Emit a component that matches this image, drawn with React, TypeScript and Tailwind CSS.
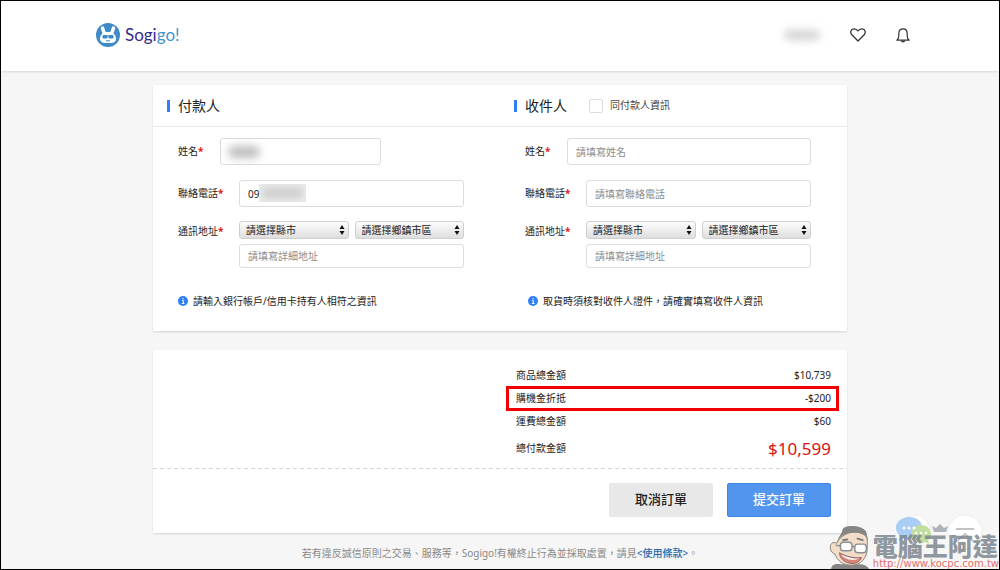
import { useState } from "react";
import type { ReactNode } from "react";

function SogiLogo() {
  return (
    <svg viewBox="0 0 48 48" className="size-6" aria-hidden="true">
      <circle cx="24" cy="24" r="24" fill="#3f8ac9" />
      <path d="M13 10c1 6 3 9 6 13M35 10c-1 6-3 9-6 13" stroke="#fff" strokeWidth="7" strokeLinecap="round" fill="none" />
      <path d="M17 18h14c5 3 9 7 9 13 0 7-5 9-11 9H19C13 40 8 38 8 31c0-6 4-10 9-13z" fill="#fff" />
      <rect x="13" y="24" width="10" height="7" rx="2" fill="#3f8ac9" />
      <rect x="25" y="24" width="10" height="7" rx="2" fill="#3f8ac9" />
      <path d="M22 26h4" stroke="#3f8ac9" strokeWidth="2" />
      <path d="M20 35.500h8" stroke="#3f8ac9" strokeWidth="2" />
    </svg>
  );
}

function Header() {
  return (
    <header className="bg-white shadow-[0_1px_2px_rgba(0,0,0,0.12)]">
      <div className="mx-auto flex h-[70px] w-full max-w-[820px] items-center justify-between pb-[2px] pl-[6px]">
        <a href="#home" className="flex items-center gap-[5px]">
          <SogiLogo />
          <span className="font-['Lato',sans-serif] text-[17px] leading-6 text-[#37298a]">
            Sogi<span className="text-[#4492ce]">go!</span>
          </span>
        </a>
        <nav className="flex items-center gap-[30px]">
          <span className="h-[10px] w-9 rounded-full bg-[#d2d2d2] blur-[4px]" />
          <button type="button" aria-label="收藏">
            <svg viewBox="0 0 16 14" className="h-[14px] w-4" fill="none" stroke="#333" strokeWidth="1.300" strokeLinejoin="round">
              <path d="M8 13 1.800 6.800C.1 4.900.4 1.100 4 .8 6 .7 7.200 1.700 8 3c.8-1.300 2-2.300 4-2.200 3.600.3 3.900 4.100 2.200 6z" />
            </svg>
          </button>
          <button type="button" aria-label="通知">
            <svg viewBox="0 0 14 15" className="h-[15px] w-[14px]" fill="none" stroke="#333" strokeWidth="1.200" strokeLinejoin="round">
              <path d="M.8 12.200c1.500-1 2-2.200 2-4.200V5.500C2.800 2.500 4.500.8 7 .8s4.200 1.700 4.200 4.700V8c0 2 .5 3.200 2 4.200z" />
              <path d="M5.300 12.800c.4 1.300 3 1.300 3.400 0" fill="#333" />
            </svg>
          </button>
        </nav>
      </div>
    </header>
  );
}

const FIELD =
  "w-full rounded-[3px] border border-[#dcdcdc] bg-white px-2 text-[10px] text-[#222] outline-none placeholder:text-[#8d8d8d]";

function Row({ id, label, wide, children }: { id: string; label: string; wide?: boolean; children: ReactNode }) {
  return (
    <div className="flex items-start">
      <label htmlFor={id} className={`shrink-0 leading-[27px] ${wide ? "w-[61px]" : "w-[42px]"}`}>
        {label}
        <span className="font-bold text-[#e0201b]">*</span>
      </label>
      {children}
    </div>
  );
}

function Picker({ id, label, text }: { id: string; label: string; text: string }) {
  return (
    <div className="relative flex-1">
      <select
        id={id}
        aria-label={label}
        className="block h-[18px] w-full appearance-none rounded-[3px] border border-[#cfcfcf] bg-linear-to-b from-[#fdfdfd] to-[#dedede] pr-4 pl-[6px] text-[10px] leading-4 text-[#222]"
      >
        <option>{text}</option>
      </select>
      <svg viewBox="0 0 6 10" className="pointer-events-none absolute top-1 right-1 h-[10px] w-[6px]" fill="#111">
        <path d="M3 0 5.500 4h-5zM3 10 .5 6h5z" />
      </svg>
    </div>
  );
}

function Address({ prefix }: { prefix: string }) {
  return (
    <Row id={`${prefix}-city`} label="通訊地址" wide>
      <div className="flex min-w-0 flex-1 flex-col gap-[5px] pt-[3px]">
        <div className="flex gap-[6px]">
          <Picker id={`${prefix}-city`} label="縣市" text="請選擇縣市" />
          <Picker id={`${prefix}-area`} label="鄉鎮市區" text="請選擇鄉鎮市區" />
        </div>
        <input aria-label="詳細地址" placeholder="請填寫詳細地址" className={`${FIELD} h-6`} />
      </div>
    </Row>
  );
}

function Heading({ children }: { children: ReactNode }) {
  return (
    <div className="flex items-center gap-2">
      <span className="h-3 w-[3px] bg-[#2f80f5]" />
      <h2 className="text-[14px] leading-5 text-[#222]">{children}</h2>
    </div>
  );
}

function Note({ children }: { children: ReactNode }) {
  return (
    <p className="flex items-center gap-[5px] leading-4">
      <svg viewBox="0 0 10 10" className="size-[10px] shrink-0">
        <circle cx="5" cy="5" r="5" fill="#2f80f5" />
        <path d="M4 4.300h1.300v3M3.800 7.500h2.600M4.600 2.500h1" stroke="#fff" fill="none" strokeWidth="1" />
      </svg>
      {children}
    </p>
  );
}

function PartyForms() {
  const [phone, setPhone] = useState("09");
  const [same, setSame] = useState(false);
  return (
    <section className="bg-white shadow-[0_1px_2px_rgba(0,0,0,0.14)]">
      <div className="grid h-[42px] grid-cols-2 items-center border-b border-[#e8e8e8]">
        <div className="pl-[14px]">
          <Heading>付款人</Heading>
        </div>
        <div className="flex items-center gap-[22px] pl-[14px]">
          <Heading>收件人</Heading>
          <label className="flex items-center gap-[7px] text-[#444]">
            <input
              type="checkbox"
              checked={same}
              onChange={(e) => setSame(e.target.checked)}
              className="size-[14px] appearance-none rounded-[2px] border border-[#dedede] bg-white checked:bg-[#2f80f5]"
            />
            同付款人資訊
          </label>
        </div>
      </div>
      <div className="grid grid-cols-2 pt-[11px] pb-[22px]">
        <div className="flex flex-col pr-9 pl-[25px]">
          <Row id="payer-name" label="姓名">
            <div className="relative w-[161px]">
              <input id="payer-name" className={`${FIELD} h-[27px]`} />
              <span className="pointer-events-none absolute top-2 left-2 h-3 w-8 rounded-full bg-[#bdbdbd] blur-[4px]" />
            </div>
          </Row>
          <div className="mt-[15px]">
            <Row id="payer-phone" label="聯絡電話" wide>
              <div className="relative flex-1">
                <input
                  id="payer-phone"
                  value={phone}
                  onChange={(e) => setPhone(e.target.value)}
                  className={`${FIELD} h-[27px]`}
                />
                <span className="pointer-events-none absolute top-1 left-5 h-[18px] w-[47px] overflow-hidden bg-[#ececec]">
                  <span className="mx-1 mt-1 block h-[10px] bg-[#c9c9c9] blur-[4px]" />
                </span>
              </div>
            </Row>
          </div>
          <div className="mt-[11px]">
            <Address prefix="payer" />
          </div>
          <div className="mt-[25px]">
            <Note>請輸入銀行帳戶/信用卡持有人相符之資訊</Note>
          </div>
        </div>
        <div className="flex flex-col pr-9 pl-[25px]">
          <Row id="receiver-name" label="姓名">
            <input id="receiver-name" placeholder="請填寫姓名" className={`${FIELD} h-[27px]`} />
          </Row>
          <div className="mt-[15px]">
            <Row id="receiver-phone" label="聯絡電話" wide>
              <input id="receiver-phone" placeholder="請填寫聯絡電話" className={`${FIELD} h-[27px]`} />
            </Row>
          </div>
          <div className="mt-[11px]">
            <Address prefix="receiver" />
          </div>
          <div className="mt-[25px] pl-[3px]">
            <Note>取貨時須核對收件人證件，請確實填寫收件人資訊</Note>
          </div>
        </div>
      </div>
    </section>
  );
}

function Summary() {
  return (
    <section className="bg-white shadow-[0_1px_2px_rgba(0,0,0,0.14)]">
      <dl className="ml-auto flex w-[331px] flex-col pt-[14px] pr-4 pb-[5px] leading-[23px]">
        <div className="flex justify-between">
          <dt>商品總金額</dt>
          <dd>$10,739</dd>
        </div>
        <div className="relative flex justify-between">
          <dt>購機金折抵</dt>
          <dd>-$200</dd>
          <span className="pointer-events-none absolute -inset-y-px right-[-8px] left-[-10px] border-3 border-[#f00000]" />
        </div>
        <div className="flex justify-between">
          <dt>運費總金額</dt>
          <dd>$60</dd>
        </div>
        <div className="flex h-[30px] items-center justify-between">
          <dt>總付款金額</dt>
          <dd className="text-[17px] text-[#dd1111]">$10,599</dd>
        </div>
      </dl>
      <svg className="block h-px w-full" aria-hidden="true">
        <line x1="0" y1="0.5" x2="100%" y2="0.5" stroke="#d4d4d4" strokeDasharray="4 3" />
      </svg>
      <div className="flex justify-end gap-[14px] px-4 pt-[14px] pb-4">
        <button type="button" className="h-[34px] w-[104px] rounded-[2px] bg-[#e8e8e8] text-[13px] font-medium text-[#222]">
          取消訂單
        </button>
        <button type="button" className="h-[34px] w-[104px] rounded-[2px] border border-[#3d85ea] bg-[#5295ef] text-[13px] font-medium text-white">
          提交訂單
        </button>
      </div>
    </section>
  );
}

function ChatBubbles() {
  return (
    <svg viewBox="0 0 90 45" className="h-[45px] w-[90px]">
      <circle cx="20" cy="16" r="15" fill="#fff" stroke="#ededed" />
      <circle cx="70" cy="18" r="17" fill="#fff" stroke="#ededed" />
      <path d="M14 3c8 0 13 4 13 11s-5 11-13 11c-2 0-4 0-5-1l-5 3 1-5C-4 14 3 3 14 3z" fill="#aacdf5" />
      <path d="M26 11c6 0 10 4 10 9 0 3-1 5-3 6l1 4-4-2c-8 2-14-2-14-8 0-5 4-9 10-9z" fill="#c1dda0" />
      <g fill="#fff">
        <circle cx="9" cy="14" r="1.500" />
        <circle cx="14" cy="14" r="1.500" />
        <circle cx="19" cy="14" r="1.500" />
        <circle cx="21" cy="19" r="1.300" />
        <circle cx="26" cy="19" r="1.300" />
        <circle cx="31" cy="19" r="1.300" />
      </g>
      <path d="m37 12 4 2 4-4 4 4 4-2-2 6H39z" fill="#aeb3b8" />
      <path d="M61 15h18M61 28l9-8 9 8" fill="none" stroke="#c3c3c3" strokeWidth="2" />
    </svg>
  );
}

function Mascot() {
  return (
    <svg viewBox="0 0 46 46" className="size-11" strokeLinejoin="round">
      <path d="M2 46c1-5 5-6 10-5h20c5 0 8 2 10 5z" fill="#858585" />
      <path
        d="M8 19C0 15-1 29 6 30c3 8 9 12 17 12 10 0 17-7 17-18V14C36 5 16 4 8 19z"
        fill="#f3ddc7"
        stroke="#8b8179"
      />
      <path d="M8 20C9 13 14 9 14 5c1-5 19-6 25 2l2 10-3-6c-7-4-15-4-22-1-4 2-6 5-8 10z" fill="#858585" />
      <path d="m14 16 6-1M29 14l7 2" stroke="#777" strokeWidth="2" />
      <rect x="12" y="18" width="12" height="9" rx="3" fill="#fff" stroke="#8a8f93" strokeWidth="1.500" />
      <rect x="27" y="20" width="12" height="9" rx="3" fill="#fff" stroke="#8a8f93" strokeWidth="1.500" />
      <path d="m24 22 3 1M7 21l5 1" stroke="#8a8f93" strokeWidth="1.500" />
      <path d="M11 29c7 4 15 6 23 5-2 5-7 7-12 6-6-1-11-5-11-11z" fill="#d88377" stroke="#8b6f69" />
      <path d="M13 31c6 3 12 4 18 4-4 3-15 1-18-4z" fill="#fff" />
    </svg>
  );
}

function Watermark() {
  return (
    <div className="pointer-events-none absolute right-0 bottom-0 flex items-end">
      <div className="absolute right-[14px] bottom-[10px]">
        <ChatBubbles />
      </div>
      <div className="relative">
        <Mascot />
      </div>
      <div className="relative">
        <p className="text-[25px] leading-[26px] font-black text-[#7c868fd9]">電腦王阿達</p>
        <p className="font-['DejaVu_Sans',sans-serif] text-[10px] leading-[10px] text-[#e0706d]">http://www.kocpc.com.tw</p>
      </div>
    </div>
  );
}

export default function App() {
  return (
    <div className="relative min-h-screen overflow-hidden border border-black bg-[#f6f6f6] font-['Noto_Sans','Noto_Sans_CJK_TC',sans-serif] text-[10px] text-[#222]">
      <Header />
      <main className="mx-auto flex w-full max-w-[694px] flex-col gap-[19px] pt-[14px]">
        <PartyForms />
        <Summary />
      </main>
      <footer className="pt-3 pb-1 text-center leading-4 text-[#888]">
        若有違反誠信原則之交易、服務等，Sogigo!有權終止行為並採取處置，請見
        <a href="#terms" className="font-medium text-[#2268ad]">
          &lt;使用條款&gt;
        </a>
        。
      </footer>
      <Watermark />
    </div>
  );
}
